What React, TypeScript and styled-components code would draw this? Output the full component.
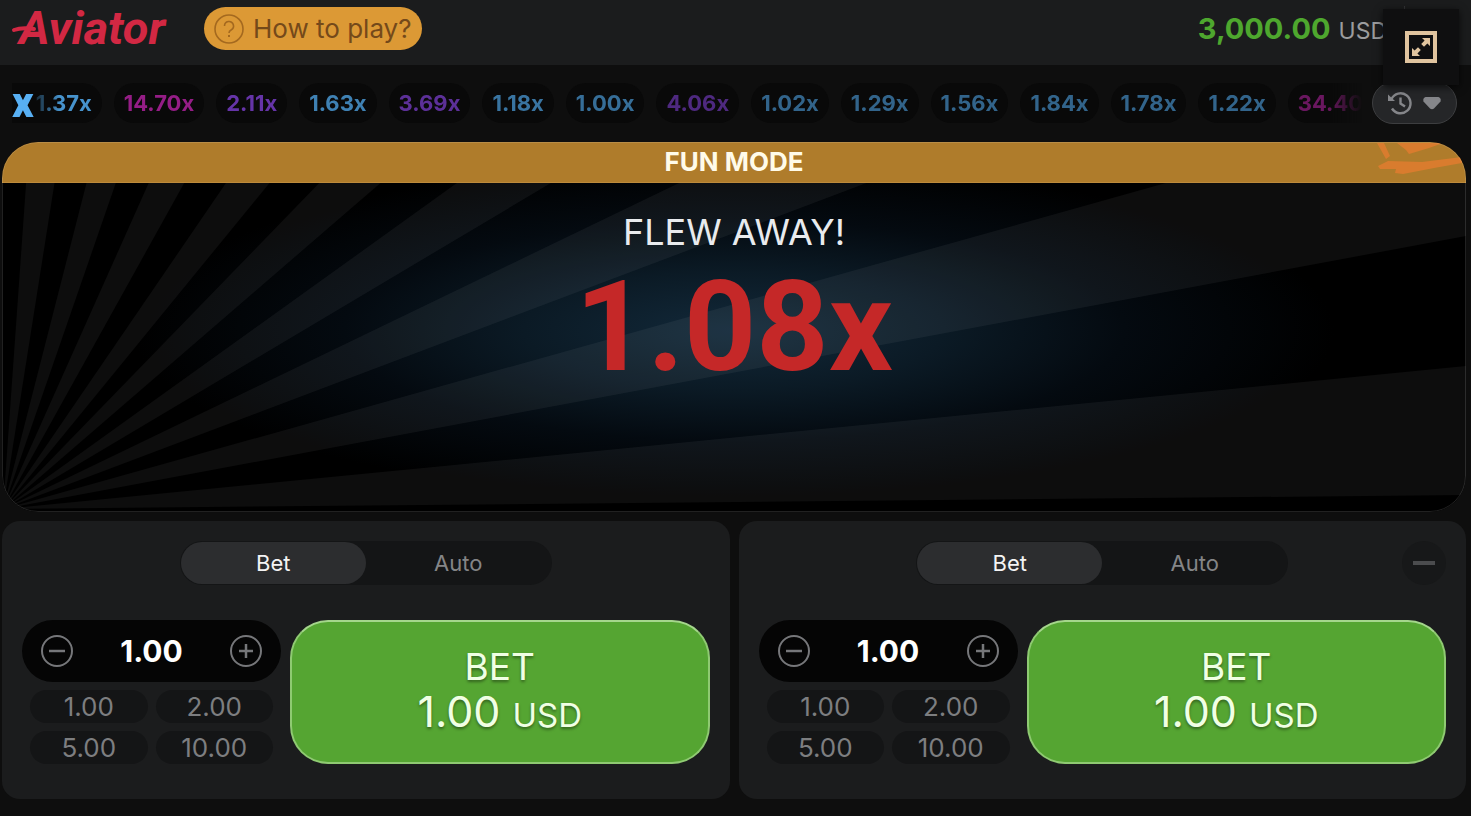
import React, { useState } from "react";
import styled, { createGlobalStyle } from "styled-components";

const GlobalStyle = createGlobalStyle`
  *, *::before, *::after { box-sizing: border-box; }
  body {
    margin: 0;
    background: #0e0e0e;
    color: #fff;
    font-family: Inter, "Liberation Sans", sans-serif;
  }
  button, input { font: inherit; color: inherit; border: 0; padding: 0; margin: 0; background: none; }
  button { cursor: pointer; }
`;

const Page = styled.div`
  position: relative;
  min-height: 100vh;
  overflow: hidden;
`;

const Header = styled.header`
  display: flex;
  align-items: center;
  height: 65px;
  padding: 0 66px 8px 12px;
  background: #1b1c1d;
`;

const Logo = styled.svg`
  display: block;
  width: 156px;
  height: 56px;
  overflow: visible;
  font-family: Roboto, sans-serif;
  font-size: 47px;
  font-weight: 700;
  font-style: italic;
`;

const HelpButton = styled.button`
  display: flex;
  align-items: center;
  gap: 9px;
  height: 43px;
  margin-left: 36px;
  padding: 0 10px;
  border-radius: 22px;
  background: #dc9935;
  color: #74491a;
  font-size: 26px;
  white-space: nowrap;
`;

const Balance = styled.div`
  display: flex;
  align-items: baseline;
  gap: 8px;
  margin-left: auto;
  color: #9b9c9e;
  font-size: 23px;
`;

const BalanceValue = styled.strong`
  color: #4ea72e;
  font-size: 29px;
  font-weight: 700;
`;

const HeaderDivider = styled.span`
  width: 1px;
  height: 46px;
  margin-left: 17px;
  background: #333436;
`;

const ExpandButton = styled.button`
  position: absolute;
  top: 9px;
  right: 12px;
  z-index: 2;
  display: grid;
  place-items: center;
  width: 76px;
  height: 76px;
  background: #0f0f10;
  box-shadow: 0 2px 8px rgba(0, 0, 0, 0.7);
`;

const HistoryBar = styled.div`
  display: flex;
  align-items: center;
  gap: 10px;
  height: 77px;
  padding: 0 14px 2px 12px;
`;

const HistoryList = styled.ol`
  display: flex;
  flex: 1;
  gap: 12px;
  min-width: 0;
  margin: 0;
  padding: 0;
  overflow: hidden;
  list-style: none;
  mask-image: linear-gradient(to right, #000 calc(100% - 34px), transparent);
`;

const tones = { blue: "#50a7e9", purple: "#7d3fd0", pink: "#b0229f" };
type Tone = keyof typeof tones;

const Chip = styled.li<{ $tone: Tone; $fade: number }>`
  display: flex;
  align-items: center;
  flex: none;
  height: 40px;
  padding: 0 10px;
  border-radius: 20px;
  background: #090909;
  color: ${(p) => tones[p.$tone]};
  font-size: 22px;
  font-weight: 700;

  span { opacity: ${(p) => p.$fade}; }

  &:first-child { padding-left: 0; border-radius: 0 20px 20px 0; }
  &:first-child span { mask-image: linear-gradient(to right, rgba(0, 0, 0, 0.25), #000 24px); }
`;

const Incoming = styled.b`
  margin-right: 2px;
  color: #58b0f4;
  font-family: Roboto, sans-serif;
  font-size: 42px;
  line-height: 40px;
`;

const HistoryButton = styled.button`
  display: flex;
  align-items: center;
  justify-content: center;
  gap: 9px;
  flex: none;
  width: 85px;
  height: 42px;
  border: 1px solid #3d3e40;
  border-radius: 21px;
  background: #252628;
`;

const Main = styled.main`
  display: grid;
  gap: 9px;
  padding: 0 5px 17px 2px;
`;

const Stage = styled.section`
  position: relative;
  height: 370px;
  border-radius: 36px;
  overflow: hidden;
  text-align: center;
  background: radial-gradient(ellipse 600px 170px at 50% 51%, #12293a 0%, #0b1a25 35%, #040a10 65%, #000 100%);

  &::after {
    content: "";
    position: absolute;
    inset: 0;
    border: 1px solid rgba(255, 255, 255, 0.13);
    border-radius: inherit;
    pointer-events: none;
  }
`;

const Rays = styled.svg`
  position: absolute;
  inset: 0;
  width: 100%;
  height: 100%;
`;

const Banner = styled.div`
  position: relative;
  height: 41px;
  border-bottom: 1px solid #bd8a3b;
  background: #af7c2b;
  color: #fffbe9;
  font-size: 26px;
  font-weight: 700;
  line-height: 40px;
`;

const Scribble = styled.svg`
  position: absolute;
  top: 0;
  right: 0;
`;

const Result = styled.div`
  position: relative;
  padding-top: 26px;
`;

const ResultLabel = styled.p`
  margin: 0;
  color: #e9ebee;
  font-size: 36px;
  line-height: 46px;
`;

const ResultValue = styled.p`
  margin: 0;
  color: #c52828;
  font-family: Roboto, "Liberation Sans", sans-serif;
  font-size: 126px;
  font-weight: 700;
  line-height: 144px;
`;

const Panels = styled.div`
  display: grid;
  grid-template-columns: 1fr 1fr;
  gap: 9px;
`;

const Panel = styled.section`
  display: grid;
  gap: 35px;
  padding: 20px 20px 35px;
  border-radius: 18px;
  background: #1b1c1d;
`;

const PanelTop = styled.div`
  display: grid;
  grid-template-columns: 1fr 372px 1fr;
  align-items: center;
`;

const Tabs = styled.div`
  display: grid;
  grid-column: 2;
  grid-template-columns: 1fr 1fr;
  height: 44px;
  padding: 1px;
  border-radius: 22px;
  background: #141516;
`;

const Tab = styled.button<{ $active: boolean }>`
  border-radius: 21px;
  background: ${(p) => (p.$active ? "#2c2d2f" : "transparent")};
  color: ${(p) => (p.$active ? "#f4f4f4" : "#848587")};
  font-size: 22px;
`;

const CollapseButton = styled.button`
  display: grid;
  place-items: center;
  justify-self: end;
  width: 44px;
  height: 44px;
  border-radius: 22px;
  background: #171819;
`;

const PanelBody = styled.div`
  display: grid;
  grid-template-columns: 259px 1fr;
  gap: 9px;
`;

const Stake = styled.div`
  display: grid;
  gap: 8px;
`;

const Stepper = styled.div`
  display: flex;
  align-items: center;
  justify-content: space-between;
  height: 62px;
  padding: 0 18px;
  border-radius: 31px;
  background: #050505;
`;

const StepButton = styled.button`
  display: grid;
  place-items: center;
  width: 34px;
  height: 34px;
`;

const StakeInput = styled.input`
  width: 110px;
  outline: none;
  color: #fff;
  font-size: 30px;
  font-weight: 700;
  text-align: center;
`;

const QuickGrid = styled.div`
  display: grid;
  grid-template-columns: 1fr 1fr;
  gap: 8px;
  padding: 0 8px;
`;

const QuickButton = styled.button`
  height: 33px;
  border-radius: 17px;
  background: #141516;
  color: #7d7e80;
  font-size: 26px;
  line-height: 33px;
`;

const BetButton = styled.button`
  display: flex;
  flex-direction: column;
  align-items: center;
  justify-content: center;
  padding-bottom: 2px;
  border: 2px solid #8fca72;
  border-top-color: #a5d68c;
  border-radius: 38px;
  background: #55a532;
  color: #f0ffe4;
  font-size: 37px;
  line-height: 45px;
  text-shadow: 0 2px 3px rgba(0, 0, 0, 0.4);
`;

const BetAmount = styled.span`
  font-size: 43px;
  small { font-size: 33px; }
`;

const rounds: [string, Tone][] = [
  ["1.37x", "blue"], ["14.70x", "pink"], ["2.11x", "purple"], ["1.63x", "blue"],
  ["3.69x", "purple"], ["1.18x", "blue"], ["1.00x", "blue"], ["4.06x", "purple"],
  ["1.02x", "blue"], ["1.29x", "blue"], ["1.56x", "blue"], ["1.84x", "blue"],
  ["1.78x", "blue"], ["1.22x", "blue"], ["34.40x", "pink"],
];

const rays = [
  "27,0 59,0", "95,0 128,0", "165,0 205,0", "252,0 301,0", "357,0 426,0",
  "512,0 618,0", "762,0 973,0", "1310,0 1464,0 1464,94", "1464,224 1464,353",
];

function AviatorLogo() {
  return (
    <Logo viewBox="0 0 156 56" role="img" aria-label="Aviator">
      <text x="7" y="43" fill="#d22843">Aviator</text>
      <path d="M2 29Q10 26 22 28" fill="none" stroke="#d22843" strokeWidth="4" strokeLinecap="round" />
    </Logo>
  );
}

function RoundIcon({ plus }: { plus?: boolean }) {
  return (
    <svg width="34" height="34" viewBox="0 0 34 34" fill="none" stroke="#76777a" strokeWidth="2" aria-hidden="true">
      <circle cx="17" cy="17" r="15" />
      <path d={plus ? "M10 17h14M17 10v14" : "M9 17h16"} strokeWidth="2.5" />
    </svg>
  );
}

function BetPanel({ name, collapsible }: { name: string; collapsible?: boolean }) {
  const [tab, setTab] = useState("Bet");
  const [stake, setStake] = useState("1.00");
  const step = (by: number) => setStake(Math.max(0.1, (parseFloat(stake) || 0) + by).toFixed(2));
  return (
    <Panel aria-label={name}>
      <PanelTop>
        <Tabs role="tablist">
          {["Bet", "Auto"].map((t) => (
            <Tab key={t} role="tab" aria-selected={tab === t} $active={tab === t} onClick={() => setTab(t)}>
              {t}
            </Tab>
          ))}
        </Tabs>
        {collapsible && (
          <CollapseButton aria-label="Remove panel">
            <svg width="24" height="6" aria-hidden="true"><path d="M1 3h22" stroke="#4b4c4e" strokeWidth="4" /></svg>
          </CollapseButton>
        )}
      </PanelTop>
      <PanelBody>
        <Stake>
          <Stepper>
            <StepButton aria-label="Decrease" onClick={() => step(-1)}><RoundIcon /></StepButton>
            <StakeInput aria-label="Stake" value={stake} onChange={(e) => setStake(e.target.value)} />
            <StepButton aria-label="Increase" onClick={() => step(1)}><RoundIcon plus /></StepButton>
          </Stepper>
          <QuickGrid>
            {["1.00", "2.00", "5.00", "10.00"].map((v) => (
              <QuickButton key={v} onClick={() => setStake(v)}>{v}</QuickButton>
            ))}
          </QuickGrid>
        </Stake>
        <BetButton>
          <span>BET</span>
          <BetAmount>{stake} <small>USD</small></BetAmount>
        </BetButton>
      </PanelBody>
    </Panel>
  );
}

export default function App() {
  return (
    <>
      <GlobalStyle />
      <Page>
        <Header>
          <AviatorLogo />
          <HelpButton>
            <svg width="30" height="30" viewBox="0 0 30 30" fill="none" stroke="#a4691f" strokeWidth="1.6" aria-hidden="true">
              <circle cx="15" cy="15" r="14" />
              <path d="M10.5 12a4.5 4.5 0 1 1 6.6 4c-1.500.8-2.100 1.500-2.100 3" />
              <path d="M15 21v2" strokeWidth="2" />
            </svg>
            How to play?
          </HelpButton>
          <Balance><BalanceValue>3,000.00</BalanceValue>USD</Balance>
          <HeaderDivider />
        </Header>
        <ExpandButton aria-label="Full screen">
          <svg width="32" height="32" viewBox="0 0 32 32" fill="#e0c49f" aria-hidden="true">
            <path fillRule="evenodd" d="M0 0h32v32H0zM4 4v24h24V4z" />
            <path d="M17 7h8v8l-2.600-2.600-3.400 3.400-2.800-2.800 3.400-3.400zM7 17l2.600 2.600 3.400-3.400 2.800 2.800-3.400 3.400L15 25H7z" />
          </svg>
        </ExpandButton>
        <HistoryBar>
          <HistoryList>
            {rounds.map(([value, tone], i) => (
              <Chip key={value} $tone={tone} $fade={Math.max(0.58, 0.88 - i * 0.04)}>
                {i === 0 && <Incoming>x</Incoming>}
                <span>{value}</span>
              </Chip>
            ))}
          </HistoryList>
          <HistoryButton aria-label="Round history">
            <svg width="26" height="26" viewBox="0 0 26 26" fill="none" stroke="#85868a" strokeWidth="2.4" aria-hidden="true">
              <path d="M4.500 9A10 10 0 1 1 5 18.500" />
              <path d="M13.500 7.500v6l4.500 3" />
              <path d="M1 4.500v6.500h7z" fill="#85868a" stroke="none" />
            </svg>
            <svg width="20" height="14" viewBox="0 0 20 14" aria-hidden="true">
              <path d="M3.500 1h13q3 1 2 4.500l-6.500 7q-2 1.500-4 0l-6.500-7Q.5 2 3.500 1z" fill="#85868a" />
            </svg>
          </HistoryButton>
        </HistoryBar>
        <Main>
          <Stage>
            <Rays viewBox="0 0 1464 370" preserveAspectRatio="none" fill="#fff" fillOpacity="0.052" aria-hidden="true">
              {rays.map((r) => <polygon key={r} points={`1,367 ${r}`} />)}
            </Rays>
            <Banner>
              FUN MODE
              <Scribble width="90" height="40" viewBox="0 0 90 40" fill="#d97c2e" aria-hidden="true">
                <path d="M1 1l7 0 6 13-4 3zM21 1h46l-14 5-20 6-3-4zM2 24l10-5 34 1 40-5v6l-28 5-31 6-8-1 1-4-16 0z" />
              </Scribble>
            </Banner>
            <Result>
              <ResultLabel>FLEW AWAY!</ResultLabel>
              <ResultValue>1.08x</ResultValue>
            </Result>
          </Stage>
          <Panels>
            <BetPanel name="First bet" />
            <BetPanel name="Second bet" collapsible />
          </Panels>
        </Main>
      </Page>
    </>
  );
}
